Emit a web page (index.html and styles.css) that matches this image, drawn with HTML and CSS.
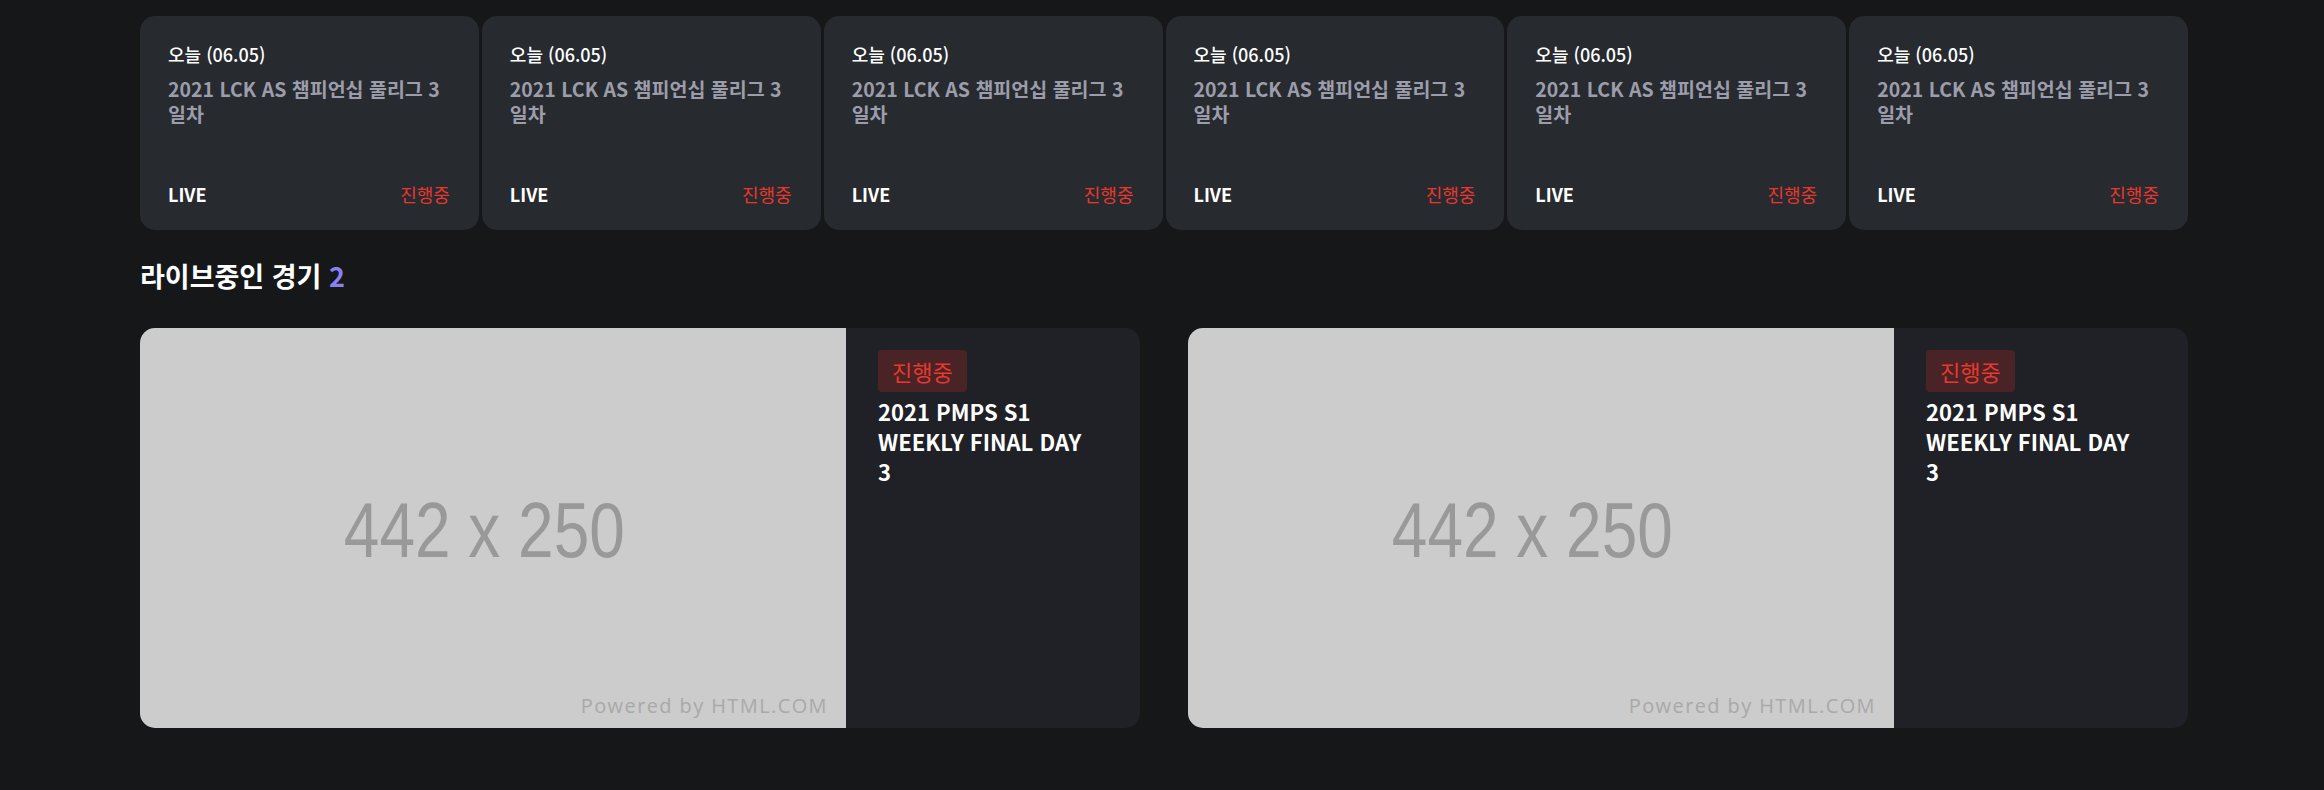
FILE: index.html
```html
<!DOCTYPE html>
<html lang="ko">
<head>
<meta charset="utf-8">
<title>라이브중인 경기</title>
<link rel="stylesheet" href="styles.css">
</head>
<body>
<div class="page">
  <div class="schedule">
    <div class="match-card">
      <div class="match-date">오늘 (06.05)</div>
      <div class="match-title">2021 LCK AS 챔피언십 풀리그 3 일차</div>
      <div class="match-footer"><span class="match-live">LIVE</span><span class="match-status">진행중</span></div>
    </div>
    <div class="match-card">
      <div class="match-date">오늘 (06.05)</div>
      <div class="match-title">2021 LCK AS 챔피언십 풀리그 3 일차</div>
      <div class="match-footer"><span class="match-live">LIVE</span><span class="match-status">진행중</span></div>
    </div>
    <div class="match-card">
      <div class="match-date">오늘 (06.05)</div>
      <div class="match-title">2021 LCK AS 챔피언십 풀리그 3 일차</div>
      <div class="match-footer"><span class="match-live">LIVE</span><span class="match-status">진행중</span></div>
    </div>
    <div class="match-card">
      <div class="match-date">오늘 (06.05)</div>
      <div class="match-title">2021 LCK AS 챔피언십 풀리그 3 일차</div>
      <div class="match-footer"><span class="match-live">LIVE</span><span class="match-status">진행중</span></div>
    </div>
    <div class="match-card">
      <div class="match-date">오늘 (06.05)</div>
      <div class="match-title">2021 LCK AS 챔피언십 풀리그 3 일차</div>
      <div class="match-footer"><span class="match-live">LIVE</span><span class="match-status">진행중</span></div>
    </div>
    <div class="match-card">
      <div class="match-date">오늘 (06.05)</div>
      <div class="match-title">2021 LCK AS 챔피언십 풀리그 3 일차</div>
      <div class="match-footer"><span class="match-live">LIVE</span><span class="match-status">진행중</span></div>
    </div>
  </div>

  <h2 class="section-title">라이브중인 경기 <span class="section-count">2</span></h2>

  <div class="live-list">
    <div class="live-card">
      <div class="thumb">
        <span class="thumb-size">442 x 250</span>
        <span class="thumb-credit">Powered by HTML.COM</span>
      </div>
      <div class="live-info">
        <span class="live-badge">진행중</span>
        <div class="live-title">2021 PMPS S1 WEEKLY FINAL DAY 3</div>
      </div>
    </div>
    <div class="live-card">
      <div class="thumb">
        <span class="thumb-size">442 x 250</span>
        <span class="thumb-credit">Powered by HTML.COM</span>
      </div>
      <div class="live-info">
        <span class="live-badge">진행중</span>
        <div class="live-title">2021 PMPS S1 WEEKLY FINAL DAY 3</div>
      </div>
    </div>
  </div>
</div>
</body>
</html>
```
FILE: styles.css
```css
* {
  box-sizing: border-box;
}

html, body {
  margin: 0;
  padding: 0;
  background: #161719;
}

body {
  font-family: "Noto Sans CJK KR", "Noto Sans", sans-serif;
  color: #ffffff;
  height: 790px;
  overflow: hidden;
}

.page {
  width: 2048px;
  margin-left: 140px;
  padding-top: 16px;
}

/* top schedule row */
.schedule {
  display: grid;
  grid-template-columns: repeat(6, 1fr);
  gap: 3px;
}

.match-card {
  height: 214px;
  background: #272a2f;
  border-radius: 15px;
  padding: 26px 28px 24px 28px;
  display: flex;
  flex-direction: column;
}

.match-date {
  font-size: 18px;
  line-height: 24px;
  font-weight: 500;
  color: #ffffff;
}

.match-title {
  margin-top: 10px;
  font-size: 19.5px;
  line-height: 25px;
  font-weight: 700;
  color: #9c9dab;
  word-break: keep-all;
}

.match-footer {
  margin-top: auto;
  display: flex;
  justify-content: space-between;
  align-items: baseline;
  line-height: 24px;
}

.match-live {
  font-size: 18px;
  font-weight: 700;
  color: #ffffff;
}

.match-status {
  font-size: 18px;
  font-weight: 400;
  color: #e8382d;
  margin-right: 1px;
}

/* section heading */
.section-title {
  margin: 28px 0 34px 0;
  font-size: 27px;
  line-height: 36px;
  font-weight: 700;
  color: #ffffff;
}

.section-count {
  color: #8a80f2;
}

/* live cards */
.live-list {
  display: grid;
  grid-template-columns: 1fr 1fr;
  gap: 48px;
}

.live-card {
  height: 400px;
  display: flex;
  border-radius: 15px;
  overflow: hidden;
  background: #202126;
}

.thumb {
  position: relative;
  flex: 0 0 706px;
  height: 400px;
  background: #cccccc;
  display: flex;
  align-items: center;
  justify-content: center;
  padding-right: 18px;
  padding-top: 4px;
}

.thumb-size {
  display: inline-block;
  font-family: "Liberation Sans", Arial, sans-serif;
  font-size: 78px;
  line-height: 1;
  color: #999999;
  transform: scaleX(0.82);
}

.thumb-credit {
  position: absolute;
  right: 18px;
  bottom: 10px;
  font-family: "Open Sans", "DejaVu Sans", sans-serif;
  font-size: 20px;
  letter-spacing: 1.4px;
  line-height: 24px;
  color: #a9a9a9;
}

.live-info {
  flex: 1;
  padding: 22px 44px 22px 32px;
  display: flex;
  flex-direction: column;
  align-items: flex-start;
  gap: 4px;
}

.live-badge {
  display: inline-block;
  padding: 8px 14px;
  font-size: 22px;
  line-height: 26px;
  color: #e8382d;
  background: #4a2326;
  border-radius: 4px;
}

.live-title {
  font-size: 22px;
  line-height: 30px;
  font-weight: 700;
  color: #ffffff;
  word-break: keep-all;
}
```
